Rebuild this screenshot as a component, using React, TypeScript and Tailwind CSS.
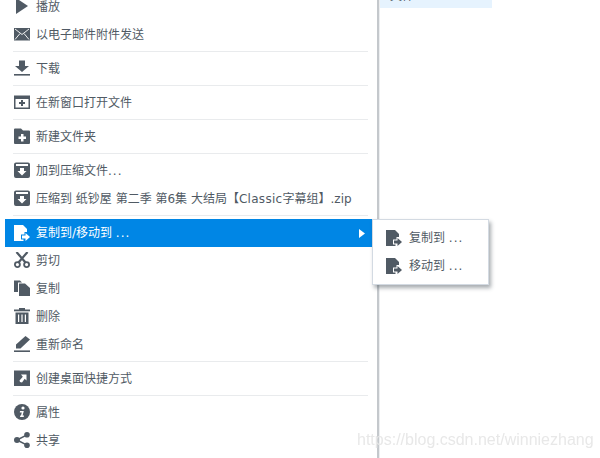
import React from "react";

const C = "#505a64";

const Svg = ({ children, w = 16, h = 16 }: { children: React.ReactNode; w?: number; h?: number }) => (
  <svg width={w} height={h} viewBox={`0 0 ${w} ${h}`} className="block shrink-0">
    {children}
  </svg>
);

const Play = () => (
  <Svg>
    <path d="M2 0 L14 8 L2 16 Z" fill={C} />
  </Svg>
);
const Mail = () => (
  <Svg>
    <rect x="0" y="2" width="16" height="12.5" fill={C} />
    <path d="M1 3 L8 8.5 L15 3 M1 13.5 L6 7.5 M15 13.5 L10 7.5" stroke="#fff" strokeWidth="0.9" fill="none" />
  </Svg>
);
const Download = () => (
  <Svg>
    <path d="M5 0.5 H11 V6 H15 L8 12 L1 6 H5 Z" fill={C} />
    <rect x="0" y="14" width="16" height="1.6" fill={C} />
  </Svg>
);
const OpenWin = () => (
  <Svg>
    <path fillRule="evenodd" d="M0 1.5 H16 V15 H0 Z M1.5 5 V13.5 H14.5 V5 Z" fill={C} />
    <path d="M7 6 H9 V8 H11 V10 H9 V12 H7 V10 H5 V8 H7 Z" fill={C} />
  </Svg>
);
const NewFolder = () => (
  <Svg>
    <path fillRule="evenodd" d="M1 0.5 H7 L9 2.5 H15 Q16 2.5 16 3.5 V15 Q16 16 15 16 H1 Q0 16 0 15 V1.5 Q0 0.5 1 0.5 Z M7 6 V8.5 H4.5 V11 H7 V13.5 H9.5 V11 H12 V8.5 H9.5 V6 Z" fill={C} />
  </Svg>
);
const Archive = () => (
  <Svg>
    <path fillRule="evenodd" d="M2 0.5 H14 Q16 0.5 16 2.5 V14 Q16 16 14 16 H2 Q0 16 0 14 V2.5 Q0 0.5 2 0.5 Z M2 2 V4 H14 V2 Z M6 6 V9 H3.5 L8 13.5 L12.5 9 H10 V6 Z" fill={C} />
  </Svg>
);
const CopyMove = ({ color }: { color: string }) => (
  <Svg>
    <path d="M0 0 H9 L13 4 V7 H10.5 V9.5 H7 V14.5 H9.5 V16 H0 Z" fill={color} />
    <path d="M8 10.5 H11.5 V8 L16 12 L11.5 16 V13.5 H8 Z" fill={color} />
  </Svg>
);
const Scissors = () => (
  <Svg>
    <path d="M2.5 0 L11.5 10.5 M13.5 0 L4.5 10.5" stroke={C} strokeWidth="2.2" fill="none" />
    <circle cx="3.4" cy="12.6" r="2.5" fill="none" stroke={C} strokeWidth="1.8" />
    <circle cx="12.6" cy="12.6" r="2.5" fill="none" stroke={C} strokeWidth="1.8" />
  </Svg>
);
const CopyIcon = () => (
  <Svg>
    <path d="M0 0.5 H6 L8 2.5 H4 V12 H0 Z" fill={C} />
    <path d="M5 3.5 H11 L16 8 V16 H5 Z" fill={C} />
  </Svg>
);
const Trash = () => (
  <Svg>
    <rect x="0" y="1.5" width="16" height="1.8" fill={C} />
    <rect x="5" y="0" width="6" height="2" fill={C} />
    <path fillRule="evenodd" d="M1.5 4.5 H14.5 V16 H1.5 Z M4 6.5 V14 H5.2 V6.5 Z M7.4 6.5 V14 H8.6 V6.5 Z M10.8 6.5 V14 H12 V6.5 Z" fill={C} />
  </Svg>
);
const Rename = () => (
  <Svg>
    <path d="M11.5 0 L16 3.5 L6.5 12.5 H2 V8.5 Z" fill={C} />
    <rect x="0" y="14.4" width="16" height="1.6" fill={C} />
  </Svg>
);
const Shortcut = () => (
  <Svg>
    <rect x="0" y="0.5" width="16" height="15.5" fill={C} />
    <path d="M7 4.5 H12.5 V10.5 L10.7 8.7 L8 12.5 L6 12 L5.5 10.5 L8.8 6.7 Z" fill="#fff" />
  </Svg>
);
const Info = () => (
  <Svg>
    <circle cx="8" cy="8" r="8" fill={C} />
    <circle cx="9" cy="4" r="1.6" fill="#fff" />
    <path d="M6 7 H9.8 L8.6 11.6 H10 L9.7 13 H6 L6.3 11.6 H7 L7.8 8.4 H5.8 Z" fill="#fff" />
  </Svg>
);
const Share = () => (
  <Svg>
    <circle cx="3" cy="8" r="3" fill={C} />
    <circle cx="13" cy="2.8" r="2.8" fill={C} />
    <circle cx="13" cy="13.2" r="2.8" fill={C} />
    <path d="M3 8 L13 2.8 M3 8 L13 13.2" stroke={C} strokeWidth="1.5" />
  </Svg>
);

const Dots = () => <span className="tracking-[1px]">...</span>;

const Row = ({ icon, children }: { icon: React.ReactNode; children: React.ReactNode }) => (
  <div className="flex h-[28px] items-center gap-[6px] pl-[9px] text-[#505a64] whitespace-nowrap">
    {icon}
    <span className="pt-[2px]">{children}</span>
  </div>
);

const Sep = () => (
  <div className="h-[6px] flex items-center ml-[8px] mr-[9px]">
    <div className="h-px w-full bg-[#e9ebed]" />
  </div>
);

export default function App() {
  return (
    <div
      className="relative w-[600px] h-[458px] overflow-hidden bg-white text-[12px] leading-[16px]"
      style={{ fontFamily: '"DejaVu Sans", "Noto Sans CJK SC", sans-serif' }}
    >
      <div className="flex h-full">
        <div className="w-[377px] shrink-0 pl-[5px] -mt-[8px]">
          <Row icon={<Play />}>播放</Row>
          <Row icon={<Mail />}>以电子邮件附件发送</Row>
          <Sep />
          <Row icon={<Download />}>下载</Row>
          <Sep />
          <Row icon={<OpenWin />}>在新窗口打开文件</Row>
          <Sep />
          <Row icon={<NewFolder />}>新建文件夹</Row>
          <Sep />
          <Row icon={<Archive />}>
            加到压缩文件<Dots />
          </Row>
          <Row icon={<Archive />}>
            压缩到 纸钞屋 第二季 第6集 大结局【<span className="tracking-[0.3px]">Classic</span>字幕组】.zip
          </Row>
          <div className="h-[7px] flex items-center ml-[8px] mr-[9px]">
            <div className="h-px w-full bg-[#e9ebed]" />
          </div>
          <div className="flex h-[28px] items-center gap-[6px] pl-[9px] pr-[12px] -mb-px bg-[#0086e5] text-white whitespace-nowrap">
            <CopyMove color="#ffffff" />
            <span>
              复制到/移动到 <Dots />
            </span>
            <svg width="6" height="9" viewBox="0 0 6 9" className="ml-auto">
              <path d="M0 0 L6 4.5 L0 9 Z" fill="#fff" />
            </svg>
          </div>
          <Row icon={<Scissors />}>剪切</Row>
          <Row icon={<CopyIcon />}>复制</Row>
          <Row icon={<Trash />}>删除</Row>
          <Row icon={<Rename />}>重新命名</Row>
          <Sep />
          <Row icon={<Shortcut />}>创建桌面快捷方式</Row>
          <Sep />
          <Row icon={<Info />}>属性</Row>
          <Row icon={<Share />}>共享</Row>
        </div>
        <div className="w-[2px] shrink-0 bg-[#c4c8cc]" />
        <div className="w-px shrink-0 bg-[#eceef0]" />
        <div className="flex-1">
          <div className="w-[112px] h-[8px] bg-[#e6f3fe] relative overflow-hidden">
            <span className="absolute left-[10px] -top-[12px] text-[#505a64]">文件</span>
          </div>
        </div>
      </div>

      <div className="absolute left-[372px] top-[219px] w-[117px] h-[66px] bg-white border border-[#d3dae2] shadow-[2px_3px_4px_rgba(60,70,80,0.45)] py-[4px]">
        <div className="flex h-[28px] items-center gap-[7px] pl-[13px] text-[#505a64] whitespace-nowrap">
          <CopyMove color={C} />
          <span>
            复制到 <Dots />
          </span>
        </div>
        <div className="flex h-[28px] items-center gap-[7px] pl-[13px] text-[#505a64] whitespace-nowrap">
          <CopyMove color={C} />
          <span>
            移动到 <Dots />
          </span>
        </div>
      </div>

      <div
        className="absolute left-[357px] top-[430px] text-[16px] leading-[20px] text-[#e8e8e8] whitespace-nowrap blur-[0.4px]"
        style={{ fontFamily: '"Liberation Sans", sans-serif' }}
      >
        https://blog.csdn.net/winniezhang
      </div>
    </div>
  );
}
